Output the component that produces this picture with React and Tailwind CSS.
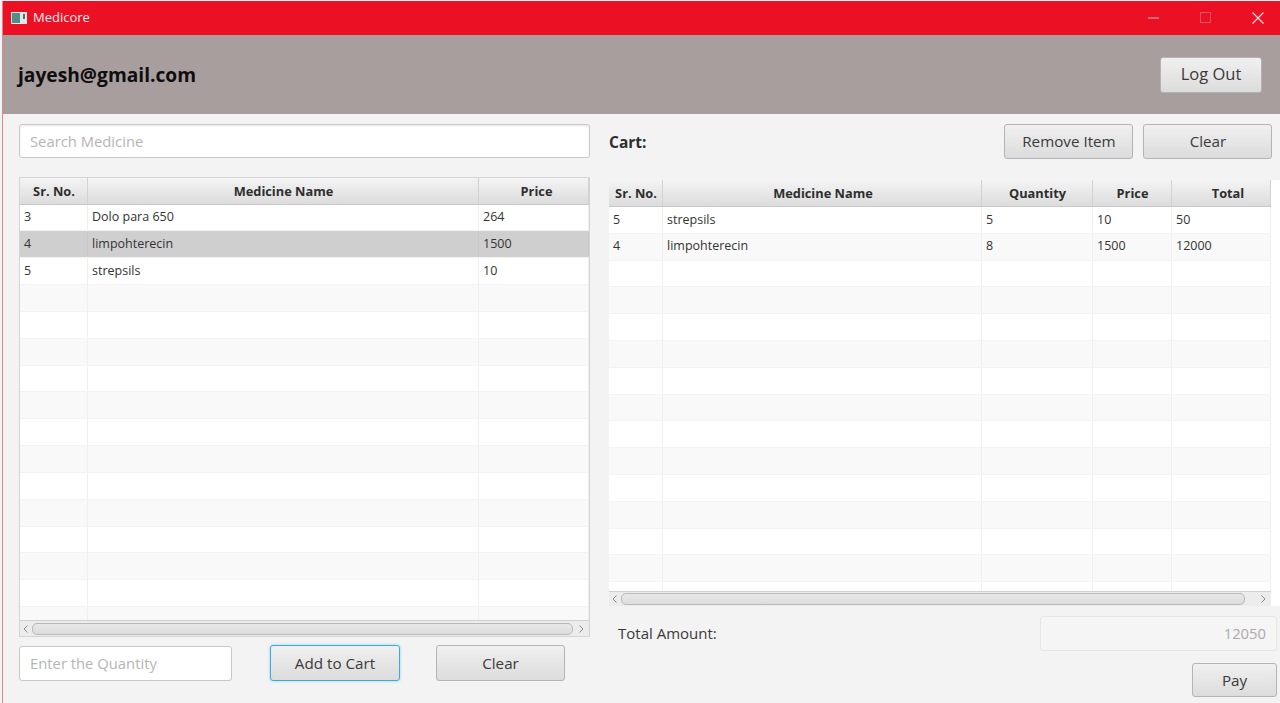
const FONT = { fontFamily: '"Open Sans", "Noto Sans", sans-serif' };

function Btn({ children, className = "" }) {
  return (
    <button className={"flex items-center justify-center rounded-[3px] border border-[#b4b4b4] bg-gradient-to-b from-[#f0f0f0] to-[#dcdcdc] text-[#3a3a3a] " + className}>
      {children}
    </button>
  );
}

function Field({ placeholder, className = "" }) {
  return (
    <div className={"flex items-center rounded-[3px] border border-[#c9c9c9] bg-white px-[10px] text-[14.8px] text-[#b5b5b5] " + className}>
      {placeholder}
    </div>
  );
}

function Table({ cols, rows, selected, rowCount, className, headH, pitch }) {
  return (
    <div className={"flex flex-col overflow-hidden " + className}>
      <div className="flex shrink-0 border-b border-[#c8c8c8] bg-gradient-to-b from-[#f4f4f4] to-[#dcdcdc]" style={{ height: headH }}>
        {cols.map((c) => (
          <div key={c.name} className="flex shrink-0 items-center justify-center border-r border-[#d2d2d2] pt-[2px] text-[12.8px] font-bold text-[#2e2e2e]" style={{ width: c.w, paddingLeft: c.shift || 0 }}>
            {c.name}
          </div>
        ))}
      </div>
      <div className="min-h-0 flex-1 overflow-hidden">
        {Array.from({ length: rowCount }).map((_, i) => {
          const r = rows[i];
          const bg = i === selected ? "bg-[#cfcfcf]" : i % 2 === 0 ? "bg-white" : "bg-[#f9f9f9]";
          return (
            <div key={i} className={"flex border-b border-[#f3f3f3] " + bg} style={{ height: pitch }}>
              {cols.map((c, j) => (
                <div key={c.name} className={"flex shrink-0 items-center border-r px-[4px] text-[12.5px] text-[#333] " + (i === selected ? "border-[#c8c8c8]" : "border-[#efefef]")} style={{ width: c.w }}>
                  {r ? r[j] : ""}
                </div>
              ))}
            </div>
          );
        })}
      </div>
    </div>
  );
}

function HScroll({ className = "", endW = 16 }) {
  return (
    <div className={"flex shrink-0 items-center bg-[#ececec] border-t border-[#d0d0d0] " + className}>
      <svg width="12" height="12" viewBox="0 0 12 12" className="shrink-0"><path d="M7.5 2.5 4 6l3.5 3.5" fill="none" stroke="#8a8a8a" strokeWidth="1" /></svg>
      <div className="h-[12px] flex-1 rounded-[5px] border border-[#b8b8b8] bg-gradient-to-b from-[#e8e8e8] to-[#dcdcdc]" />
      <div className="flex shrink-0 justify-end pr-[2px]" style={{ width: endW }}>
        <svg width="12" height="12" viewBox="0 0 12 12"><path d="M4.5 2.5 8 6l-3.5 3.5" fill="none" stroke="#8a8a8a" strokeWidth="1" /></svg>
      </div>
    </div>
  );
}

export default function App() {
  const leftCols = [
    { name: "Sr. No.", w: 68, shift: 1 },
    { name: "Medicine Name", w: 391, shift: 1 },
    { name: "Price", w: 110, shift: 6 },
  ];
  const leftRows = [
    ["3", "Dolo para 650", "264"],
    ["4", "limpohterecin", "1500"],
    ["5", "strepsils", "10"],
  ];
  const rightCols = [
    { name: "Sr. No.", w: 54, shift: 1 },
    { name: "Medicine Name", w: 319, shift: 2 },
    { name: "Quantity", w: 111, shift: 1 },
    { name: "Price", w: 79, shift: 1 },
    { name: "Total", w: 99, shift: 14 },
  ];
  const rightRows = [
    ["5", "strepsils", "5", "10", "50"],
    ["4", "limpohterecin", "8", "1500", "12000"],
  ];
  return (
    <div className="h-[703px] w-[1280px] overflow-hidden bg-[#f3f3f3] pl-[2px] pt-px" style={FONT}>
      <div className="flex h-[702px] flex-col border-l border-[#d98a8a] bg-[#f3f3f3]">
        <div className="flex h-[34px] shrink-0 items-center justify-between bg-[#eb1024] pl-[8px]">
          <div className="flex items-center gap-[6px] text-[13px] text-[#ffe9ec]">
            <svg width="16" height="12" viewBox="0 0 16 12">
              <rect width="16" height="12" fill="#dfe8e6" />
              <rect x="1" y="1" width="8" height="10" fill="#4f8f88" />
              <rect x="12" y="2" width="2" height="5" fill="#5a6a70" />
            </svg>
            Medicore
          </div>
          <div className="flex items-center">
            <svg width="52" height="16" viewBox="0 0 52 16"><path d="M0 8h11" stroke="#f6b8bf" strokeWidth="1" /></svg>
            <svg width="52" height="16" viewBox="0 0 52 16"><rect x="0.5" y="2.5" width="10" height="10" fill="none" stroke="#f2505e" strokeWidth="1" /></svg>
            <svg width="28" height="16" viewBox="0 0 28 16"><path d="M0.5 2.5l11 11M11.5 2.5l-11 11" stroke="#ffe3e6" strokeWidth="1.1" /></svg>
          </div>
        </div>

        <div className="flex h-[79px] shrink-0 items-center justify-between bg-[#a89e9e] pl-[15px] pr-[18px]">
          <div className="translate-y-[1px] text-[19.2px] font-bold text-[#0e0e0e]">jayesh@gmail.com</div>
          <Btn className="h-[36px] w-[102px] text-[16.5px]">Log Out</Btn>
        </div>

        <div className="flex min-h-0 flex-1">
          <div className="ml-[16px] flex w-[571px] shrink-0 flex-col">
            <Field placeholder="Search Medicine" className="mt-[10px] h-[34px] w-full shadow-[inset_0_1px_2px_#e5e5e5]" />
            <div className="mt-[19px] flex h-[460px] flex-col border border-[#d4d4d4]">
              <Table cols={leftCols} rows={leftRows} selected={1} rowCount={16} className="min-h-0 flex-1" headH={26.5} pitch={26.85} />
              <HScroll className="h-[16px]" />
            </div>
            <div className="mt-[8px] flex items-center">
              <Field placeholder="Enter the Quantity" className="h-[35px] w-[213px]" />
              <Btn className="ml-[38px] h-[36px] w-[130px] !border-[#3fa9d8] text-[15.2px] shadow-[0_0_3px_#8fd0ee]">Add to Cart</Btn>
              <Btn className="ml-[36px] h-[36px] w-[129px] text-[15.2px]">Clear</Btn>
            </div>
          </div>

          <div className="ml-[19px] flex min-w-0 flex-1 flex-col">
            <div className="mt-[10px] flex h-[35px] shrink-0 items-center">
              <div className="pt-[2px] text-[15.5px] font-bold text-[#2e2e2e]">Cart:</div>
              <Btn className="ml-[358px] h-[35px] w-[129px] text-[15.2px]">Remove Item</Btn>
              <Btn className="ml-[10px] h-[35px] w-[129px] text-[15.2px]">Clear</Btn>
            </div>
            <div className="mt-[21px] flex h-[426px] w-[671px] shrink-0 flex-col bg-white">
              <div className="flex h-[426px] w-[662px] flex-col">
                <Table cols={rightCols} rows={rightRows} rowCount={16} className="min-h-0 flex-1" headH={27} pitch={26.8} />
                <HScroll className="h-[15px]" endW={26} />
              </div>
            </div>
            <div className="flex items-center">
              <div className="ml-[9px] mt-[10px] text-[15px] text-[#3a3a3a]">Total Amount:</div>
              <div className="ml-auto mr-[3px] mt-[10px] flex h-[35px] w-[237px] items-center justify-end rounded-[3px] border border-[#e6e6e6] bg-[#f5f5f5] pr-[10px] text-[14.8px] text-[#aaaaaa]">12050</div>
            </div>
            <div className="mt-[12px] flex justify-end pr-[3px]">
              <Btn className="h-[34px] w-[85px] text-[15.2px]">Pay</Btn>
            </div>
          </div>
        </div>
      </div>
    </div>
  );
}
